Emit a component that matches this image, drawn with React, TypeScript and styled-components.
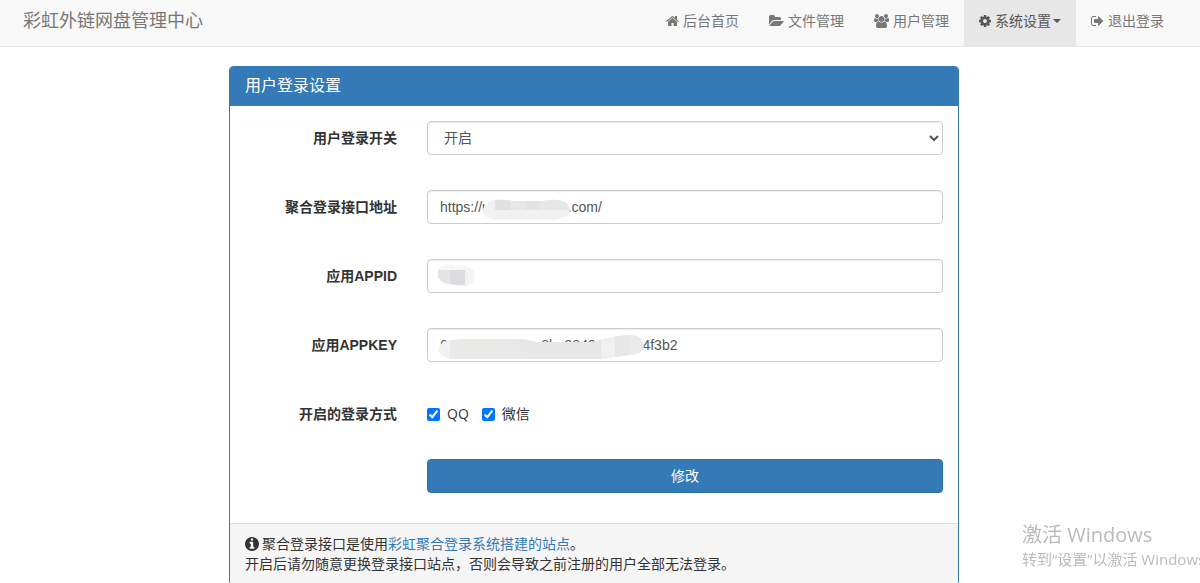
import React from "react";
import styled, { createGlobalStyle } from "styled-components";

const GlobalStyle = createGlobalStyle`
  *, *::before, *::after { box-sizing: border-box; }
  body {
    margin: 0;
    background: #fff;
    color: #333;
    font-family: "Liberation Sans", "Noto Sans CJK SC", sans-serif;
    font-size: 14px;
    line-height: 20px;
  }
  input, select, button { font-family: inherit; font-size: inherit; line-height: inherit; }
`;

const Navbar = styled.header`
  display: flex;
  justify-content: space-between;
  height: 47px;
  padding: 0 21px 0 23px;
  background: #f8f8f8;
  border-bottom: 1px solid #e7e7e7;
`;

const Brand = styled.a`
  padding: 11px 0 15px;
  color: #777;
  font-size: 18px;
  text-decoration: none;
  white-space: nowrap;
`;

const NavList = styled.nav`
  display: flex;
`;

const NavLink = styled.a<{ $active?: boolean }>`
  display: flex;
  align-items: center;
  gap: 4px;
  padding: 11px 15px 15px;
  color: ${(p) => (p.$active ? "#555" : "#777")};
  background: ${(p) => (p.$active ? "#e7e7e7" : "transparent")};
  text-decoration: none;
  white-space: nowrap;
`;

const Caret = styled.span`
  margin-left: -2px;
  border-top: 4px solid;
  border-left: 4px solid transparent;
  border-right: 4px solid transparent;
`;

const Main = styled.main`
  padding: 19px 12px 0 0;
`;

const Panel = styled.section`
  max-width: 730px;
  margin: 0 auto;
  border: 1px solid #337ab7;
  border-radius: 4px;
  overflow: hidden;
`;

const PanelTitle = styled.h3`
  margin: 0;
  padding: 9px 15px 10px;
  background: #337ab7;
  color: #fff;
  font-size: 16px;
  font-weight: 400;
`;

const Form = styled.form`
  display: flex;
  flex-direction: column;
  gap: 35px;
  padding: 15px 0 30px;
`;

const Row = styled.div`
  display: grid;
  grid-template-columns: 1fr 3fr;
`;

const labelStyle = `
  padding: 7px 15px 0;
  font-weight: 700;
  text-align: right;
`;

const FieldLabel = styled.label`${labelStyle}`;
const GroupLabel = styled.span`${labelStyle}`;

const Field = styled.div`
  position: relative;
  grid-column: 2;
  padding: 0 15px;
`;

const controlStyle = `
  display: block;
  width: 100%;
  height: 34px;
  color: #555;
  background: #fff;
  border: 1px solid #ccc;
  border-radius: 4px;
  box-shadow: inset 0 1px 1px rgba(0, 0, 0, 0.075);
`;

const TextInput = styled.input`
  ${controlStyle}
  padding: 6px 12px;
`;

const Select = styled.select`
  ${controlStyle}
  padding: 6px 12px;
`;

const Mask = styled.svg`
  position: absolute;
  top: 0;
  left: 15px;
  pointer-events: none;
`;

const CheckGroup = styled.div`
  display: flex;
  gap: 13px;
  height: 27px;
  padding: 7px 15px 0;
`;

const CheckLabel = styled.label`
  display: flex;
  align-items: center;
  gap: 7px;
  font-family: "Open Sans", "Noto Sans CJK SC", sans-serif;
`;

const Check = styled.input`
  width: 13px;
  height: 13px;
  margin: 0;
`;

const Submit = styled.button`
  width: 100%;
  height: 34px;
  color: #fff;
  background: #337ab7;
  border: 1px solid #2e6da4;
  border-radius: 4px;
`;

const PanelFooter = styled.footer`
  padding: 10px 15px;
  background: #f5f5f5;
  border-top: 1px solid #ddd;
`;

const Note = styled.p`
  display: flex;
  align-items: center;
  margin: 0;
`;

const NoteIcon = styled.span`
  display: flex;
  margin-right: 3px;
`;

const NoteLink = styled.a`
  color: #337ab7;
  text-decoration: none;
`;

const Activation = styled.aside`
  position: fixed;
  left: calc(100% - 178px);
  bottom: 14px;
  color: #bbb;
  font-family: "Open Sans", "Noto Sans CJK SC", sans-serif;
  white-space: nowrap;
  pointer-events: none;
`;

const ActivationTitle = styled.div`
  font-size: 20px;
  line-height: 28px;
`;

const ActivationText = styled.div`
  font-size: 15px;
  line-height: 20px;
`;

const icons = {
  home: {
    x: 64,
    w: 1664,
    d: "M1472 992v480q0 26-19 45t-45 19h-384v-384h-256v384h-384q-26 0-45-19t-19-45v-480q0-1 .5-3t.5-3l575-474 575 474q1 2 1 6zm223-69l-62 74q-8 9-21 11h-3q-13 0-21-7l-692-577-692 577q-12 8-24 7-13-2-21-11l-62-74q-8-10-7-23.5t11-21.5l719-599q32-26 76-26t76 26l244 204v-195q0-14 9-23t23-9h192q14 0 23 9t9 23v408l219 182q10 8 11 21.5t-7 23.5z",
  },
  folder: {
    x: -64,
    w: 1920,
    d: "M1815 952q0 31-31 66l-336 396q-43 51-120.5 86.5t-143.5 35.5h-1088q-34 0-60.5-13t-26.5-43q0-31 31-66l336-396q43-51 120.5-86.5t143.5-35.5h1088q34 0 60.5 13t26.5 43zm-343-344v160h-832q-94 0-197 47.5t-164 119.5l-337 396-5 6q0-4-.5-12.5t-.5-12.5v-960q0-92 66-158t158-66h320q92 0 158 66t66 158v32h544q92 0 158 66t66 158z",
  },
  users: {
    x: -64,
    w: 1920,
    d: "M529 896q-162 5-265 128h-134q-82 0-138-40.5t-56-118.5q0-353 124-353 6 0 43.5 21t97.5 42.5 119 21.5q67 0 133-23-5 37-5 66 0 159 93 293zm1071 637q0 120-73 189.5t-194 69.5h-874q-121 0-194-69.5t-73-189.5q0-53 3.5-103.5t14-109 26.5-108.5 43-97.5 62-81 85.5-53.5 111.5-20q10 0 43 21.5t73 48 107 48 135 21.5 135-21.5 107-48 73-48 43-21.5q61 0 111.5 20t85.5 53.5 62 81 43 97.5 26.5 108.5 14 109 3.5 103.5zm-1024-1277q0 106-75 181t-181 75-181-75-75-181 75-181 181-75 181 75 75 181zm704 384q0 159-112.5 271.5t-271.5 112.5-271.5-112.5-112.5-271.5 112.5-271.5 271.5-112.5 271.5 112.5 112.5 271.5zm576 225q0 78-56 118.5t-138 40.5h-134q-103-123-265-128 93-134 93-293 0-29-5-66 66 23 133 23 59 0 119-21.5t97.5-42.5 43.5-21q124 0 124 353zm-128-609q0 106-75 181t-181 75-181-75-75-181 75-181 181-75 181 75 75 181z",
  },
  cog: {
    x: 128,
    w: 1536,
    d: "M1152 896q0-106-75-181t-181-75-181 75-75 181 75 181 181 75 181-75 75-181zm512-109v222q0 12-8 23t-20 13l-185 28q-19 54-39 91 35 50 107 138 10 12 10 25t-9 23q-27 37-99 108t-94 71q-12 0-26-9l-138-108q-44 23-91 38-16 136-29 186-7 28-36 28h-222q-14 0-24.5-8.5t-11.5-21.5l-28-184q-49-16-90-37l-141 107q-10 9-25 9-14 0-25-11-126-114-165-168-7-10-7-23 0-12 8-23 15-21 51-66.5t54-70.5q-27-50-41-99l-183-27q-13-2-21-12.5t-8-23.5v-222q0-12 8-23t19-13l186-28q14-46 39-92-40-57-107-138-10-12-10-24 0-10 9-23 26-36 98.5-107.5t94.5-71.5q13 0 26 10l138 107q44-23 91-38 16-136 29-186 7-28 36-28h222q14 0 24.5 8.5t11.5 21.5l28 184q49 16 90 37l142-107q9-9 24-9 13 0 25 10 129 119 165 170 7 8 7 22 0 12-8 23-15 21-51 66.5t-54 70.5q26 50 41 98l183 28q13 2 21 12.5t8 23.5z",
  },
  signOut: {
    x: 64,
    w: 1664,
    d: "M704 1440q0 4 1 20t.5 26.5-3 23.5-10 19.5-20.5 6.5h-320q-119 0-203.5-84.5t-84.5-203.5v-704q0-119 84.5-203.5t203.5-84.5h320q13 0 22.5 9.5t9.5 22.5q0 4 1 20t.5 26.5-3 23.5-10 19.5-20.5 6.5h-320q-66 0-113 47t-47 113v704q0 66 47 113t113 47h312l11.5 1 11.5 3 8 5.5 7 9 2 13.5zm928-544q0 26-19 45l-544 544q-19 19-45 19t-45-19-19-45v-288h-448q-26 0-45-19t-19-45v-384q0-26 19-45t45-19h448v-288q0-26 19-45t45-19 45 19l544 544q19 19 19 45z",
  },
};

function Icon({ name }: { name: keyof typeof icons }) {
  const { x, w, d } = icons[name];
  return (
    <svg width={w / 128} height={14} viewBox={`${x} 0 ${w} 1792`} fill="currentColor" aria-hidden="true">
      <path d={d} />
    </svg>
  );
}

function InfoIcon() {
  return (
    <svg width="14" height="14" viewBox="128 128 1536 1536" fill="currentColor" aria-hidden="true">
      <path d="M1152 1376v-160q0-14-9-23t-23-9h-96v-512q0-14-9-23t-23-9h-320q-14 0-23 9t-9 23v160q0 14 9 23t23 9h96v320h-96q-14 0-23 9t-9 23v160q0 14 9 23t23 9h448q14 0 23-9t9-23zm-128-896v-160q0-14-9-23t-23-9h-192q-14 0-23 9t-9 23v160q0 14 9 23t23 9h192q14 0 23-9t9-23zm640 416q0 209-103 385.5t-279.5 279.5-385.5 103-385.5-103-279.5-279.5-103-385.5 103-385.5 279.5-279.5 385.5-103 385.5 103 279.5 279.5 103 385.5z" />
    </svg>
  );
}

export default function App() {
  return (
    <>
      <GlobalStyle />
      <Navbar>
        <Brand href="#">彩虹外链网盘管理中心</Brand>
        <NavList>
          <NavLink href="#"><Icon name="home" />后台首页</NavLink>
          <NavLink href="#"><Icon name="folder" />文件管理</NavLink>
          <NavLink href="#"><Icon name="users" />用户管理</NavLink>
          <NavLink href="#" $active><Icon name="cog" />系统设置<Caret /></NavLink>
          <NavLink href="#"><Icon name="signOut" />退出登录</NavLink>
        </NavList>
      </Navbar>
      <Main>
        <Panel>
          <PanelTitle>用户登录设置</PanelTitle>
          <Form onSubmit={(e) => e.preventDefault()}>
            <Row>
              <FieldLabel htmlFor="login-switch">用户登录开关</FieldLabel>
              <Field>
                <Select id="login-switch" defaultValue="1">
                  <option value="1">开启</option>
                  <option value="0">关闭</option>
                </Select>
              </Field>
            </Row>
            <Row>
              <FieldLabel htmlFor="login-url">聚合登录接口地址</FieldLabel>
              <Field>
                <TextInput id="login-url" type="text" defaultValue="https://uuuuuuuuuuu.com/" />
                <Mask width="160" height="34" aria-hidden="true">
                  <clipPath id="mask-url">
                    <path d="M68 10Q76 9 86 11H116Q130 8 138 12Q146 19 141 25Q134 30 124 30H68Q58 28 55 21Q58 12 68 10Z" />
                  </clipPath>
                  <g clipPath="url(#mask-url)">
                    <rect x="50" width="100" height="34" fill="#f1f1f1" />
                    <rect x="68" y="0" width="15" height="20" fill="#e1e1e1" />
                    <rect x="83" y="0" width="60" height="20" fill="#e6e7e7" />
                    <rect x="98" y="0" width="15" height="20" fill="#e3e3e3" />
                  </g>
                </Mask>
              </Field>
            </Row>
            <Row>
              <FieldLabel htmlFor="app-id">应用APPID</FieldLabel>
              <Field>
                <TextInput id="app-id" type="text" defaultValue="1000" />
                <Mask width="160" height="34" aria-hidden="true">
                  <clipPath id="mask-id">
                    <path d="M11 11Q16 3 28 6H35Q46 8 48 16Q47 26 38 27L22 25Q15 24 13 20L11 19Z" />
                  </clipPath>
                  <g clipPath="url(#mask-id)">
                    <rect width="60" height="34" fill="#f7f7f7" />
                    <rect y="11" width="23" height="15" fill="#e5e3e4" />
                    <rect x="23" y="11" width="15" height="15" fill="#dbdcde" />
                    <rect x="38" y="9" width="15" height="18" fill="#f3f3f3" />
                  </g>
                </Mask>
              </Field>
            </Row>
            <Row>
              <FieldLabel htmlFor="app-key">应用APPKEY</FieldLabel>
              <Field>
                <TextInput id="app-key" type="text" defaultValue="6aaaaaaaaaaaa8ba8840aaaaaa4f3b2" />
                <Mask width="240" height="34" aria-hidden="true">
                  <clipPath id="mask-key">
                    <path d="M20 13L34 11H96L110 14H166Q186 7 205 7Q215 8 217 16Q217 26 203 27L174 31H24Q13 29 11 22Q12 15 20 13Z" />
                  </clipPath>
                  <g clipPath="url(#mask-key)">
                    <rect width="240" height="34" fill="#f2f2f2" />
                    <rect x="23" width="60" height="34" fill="#e9e9e8" />
                    <rect x="83" width="16" height="34" fill="#e8e8e8" />
                    <rect x="99" width="75" height="34" fill="#e6e7e6" />
                    <rect x="174" width="14" height="34" fill="#f0f0f0" />
                    <rect x="188" width="15" height="34" fill="#e7e7e7" />
                    <rect x="203" width="15" height="34" fill="#ebebeb" />
                  </g>
                </Mask>
              </Field>
            </Row>
            <Row>
              <GroupLabel id="login-methods">开启的登录方式</GroupLabel>
              <CheckGroup role="group" aria-labelledby="login-methods">
                <CheckLabel><Check type="checkbox" defaultChecked />QQ</CheckLabel>
                <CheckLabel><Check type="checkbox" defaultChecked />微信</CheckLabel>
              </CheckGroup>
            </Row>
            <Row>
              <Field>
                <Submit type="submit">修改</Submit>
              </Field>
            </Row>
          </Form>
          <PanelFooter>
            <Note>
              <NoteIcon><InfoIcon /></NoteIcon>
              聚合登录接口是使用<NoteLink href="#">彩虹聚合登录系统搭建的站点</NoteLink>。
            </Note>
            <Note>开启后请勿随意更换登录接口站点，否则会导致之前注册的用户全部无法登录。</Note>
          </PanelFooter>
        </Panel>
      </Main>
      <Activation>
        <ActivationTitle>激活 Windows</ActivationTitle>
        <ActivationText>转到“设置”以激活 Windows。</ActivationText>
      </Activation>
    </>
  );
}
